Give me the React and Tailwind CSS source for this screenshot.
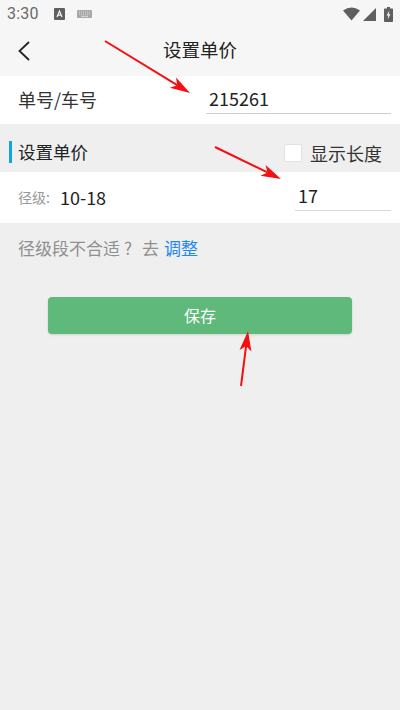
import { useState } from "react";

const FONT = { fontFamily: '"Noto Sans CJK SC", "Noto Sans", sans-serif' };

function StatusBar() {
  return (
    <div className="flex items-center justify-between h-7 pl-[7px] pr-[7px]">
      <div className="flex items-center">
        <span className="text-[16px] text-[#6a6a6a] tracking-[0.2px]" style={{ fontFamily: "Roboto, sans-serif" }}>3:30</span>
        <svg width="11" height="12" viewBox="0 0 11 12" className="ml-[15px]">
          <rect width="11" height="12" rx="1" fill="#5f5f5f" />
          <path d="M3 9 L5.5 3 L8 9 M4 7.2 H7" stroke="#f5f5f5" strokeWidth="1.2" fill="none" />
        </svg>
        <svg width="15" height="8" viewBox="0 0 15 8" className="ml-[12px]">
          <rect width="15" height="8" rx="1" fill="#a8a8a8" />
          <path d="M2 2 H13 M2 4 H13" stroke="#e6e6e6" strokeWidth="0.8" strokeDasharray="1 1" />
          <path d="M4 6.3 H11" stroke="#e6e6e6" strokeWidth="0.9" />
        </svg>
      </div>
      <div className="flex items-center">
        <svg width="17" height="14" viewBox="0 0 17 14">
          <path d="M0 3.5 Q8.5 -2.5 17 3.5 L8.5 13.5 Z" fill="#5f5f5f" />
        </svg>
        <svg width="13" height="13" viewBox="0 0 13 13" className="ml-[3px]">
          <path d="M13 0 V13 H0 Z" fill="#5f5f5f" />
        </svg>
        <svg width="9" height="15" viewBox="0 0 9 15" className="ml-[8px]">
          <path d="M3 0 H6 V1.5 H8.2 Q9 1.5 9 2.3 V14.2 Q9 15 8.2 15 H0.8 Q0 15 0 14.2 V2.3 Q0 1.5 0.8 1.5 H3 Z" fill="#5f5f5f" />
          <path d="M5.4 3.5 L2.6 8.6 H4.3 L3.6 12.5 L6.5 7.2 H4.8 Z" fill="#f5f5f5" />
        </svg>
      </div>
    </div>
  );
}

function Arrow({ from, to }) {
  // to is the tip; the head is a filled barb pointing at it
  const dx = to[0] - from[0];
  const dy = to[1] - from[1];
  const len = Math.hypot(dx, dy);
  const ux = dx / len;
  const uy = dy / len;
  const bx = to[0] - ux * 20;
  const by = to[1] - uy * 20;
  const nx = bx + ux * 5;
  const ny = by + uy * 5;
  const head = `${to[0]},${to[1]} ${bx - uy * 6},${by + ux * 6} ${nx},${ny} ${bx + uy * 6},${by - ux * 6}`;
  return (
    <>
      <line x1={from[0]} y1={from[1]} x2={nx} y2={ny} stroke="#f40f12" strokeWidth="2" />
      <polygon points={head} fill="#f40f12" />
    </>
  );
}

export default function App() {
  const [showLength, setShowLength] = useState(false);

  return (
    <div className="relative w-[400px] h-[710px] overflow-hidden bg-[#efefef] text-[#222]" style={FONT}>
      <div className="bg-[#f6f6f6] h-[76px]">
        <StatusBar />
        <div className="relative flex items-center justify-center h-[48px] pb-[6px]">
          <button className="absolute left-[17px] top-[12px]">
            <svg width="14" height="22" viewBox="0 0 14 22" className="block">
              <path d="M12 2 L2.5 11 L12 20" stroke="#222" strokeWidth="1.8" fill="none" />
            </svg>
          </button>
          <h1 className="text-[18.5px] leading-none font-normal text-[#222]">设置单价</h1>
        </div>
      </div>

      <div className="flex items-center justify-between h-[48px] bg-white pl-[18px] pr-[9px]">
        <span className="text-[18px] leading-[26px] pb-[2px] text-[#333]">单号/车号</span>
        <div className="w-[185px] h-[28px] border-b border-[#cfcfcf] pl-[3px] text-[18px] leading-[24px] text-[#222]">215261</div>
      </div>

      <div className="flex items-center justify-between h-[48px] pt-[8px] pl-[9px] pr-[18px]">
        <div className="flex items-center">
          <div className="w-[3px] h-[22px] bg-[#12a5e6]" />
          <span className="ml-[6px] text-[17.5px] leading-[24px] text-[#222]">设置单价</span>
        </div>
        <label className="flex items-center cursor-pointer">
          <input
            type="checkbox"
            checked={showLength}
            onChange={() => setShowLength(!showLength)}
            className="appearance-none w-[18px] h-[18px] mt-[2px] rounded-[2px] bg-white border border-[#e2e2e2]"
          />
          <span className="ml-[8px] text-[18px] leading-[24px] pt-[2px] text-[#333]">显示长度</span>
        </label>
      </div>

      <div className="flex items-center justify-between h-[51px] bg-white pl-[18px] pr-[9px]">
        <div className="flex items-center">
          <span className="text-[14px] text-[#999]">径级:</span>
          <span className="ml-[10px] text-[18px] text-[#222]">10-18</span>
        </div>
        <div className="w-[96px] h-[27px] border-b border-[#d9d9d9] pl-[3px] text-[18px] leading-[22px] text-[#222]">17</div>
      </div>

      <div className="flex items-center h-[52px] pb-[2px] pl-[18px] text-[17px] text-[#909090]">
        径级段不合适<span className="ml-[4px]">?</span><span className="ml-[10px]">去</span><span className="ml-[5px] text-[#1f88ee]">调整</span>
      </div>

      <div className="px-[48px] mt-[22px]">
        <button className="w-full h-[37px] pb-[2px] rounded-[4px] bg-[#5eb97b] text-[16px] text-white shadow-sm">保存</button>
      </div>

      <svg width="400" height="710" viewBox="0 0 400 710" className="absolute left-0 top-0 pointer-events-none">
        <Arrow from={[105, 41]} to={[190, 93]} />
        <Arrow from={[215, 147]} to={[281, 179]} />
        <Arrow from={[241, 386]} to={[248, 331]} />
      </svg>
    </div>
  );
}
